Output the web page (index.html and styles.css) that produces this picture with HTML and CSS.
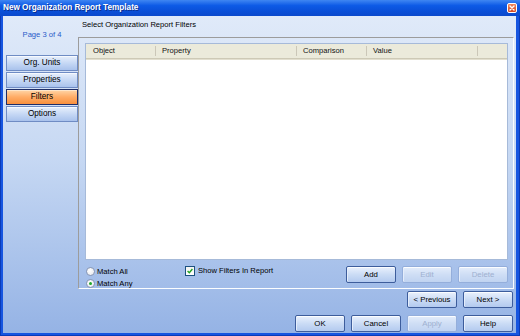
FILE: index.html
```html
<!DOCTYPE html>
<html lang="en">
<head>
  <meta charset="UTF-8" />
  <title>New Organization Report Template</title>
  <link rel="stylesheet" href="styles.css">
</head>
<body>
  <div class="window">
    <div class="titlebar">
      <span class="title">New Organization Report Template</span>
      <span class="close">
        <svg width="10" height="10" viewBox="0 0 10 10">
          <defs>
            <linearGradient id="cg" x1="0" y1="0" x2="0" y2="1">
              <stop offset="0" stop-color="#f08a60"/>
              <stop offset="1" stop-color="#d2441e"/>
            </linearGradient>
          </defs>
          <rect x="0.5" y="0.5" width="9" height="9" rx="1.5" fill="url(#cg)" stroke="#fff" stroke-width="1"/>
          <path d="M3 3 L7 7 M7 3 L3 7" stroke="#fff" stroke-width="1.4" stroke-linecap="round"/>
        </svg>
      </span>
    </div>

    <div class="content">
      <aside class="sidebar">
        <div class="page">Page 3 of 4</div>
        <nav class="steps">
          <div class="step">Org. Units</div>
          <div class="step">Properties</div>
          <div class="step active">Filters</div>
          <div class="step">Options</div>
        </nav>
      </aside>

      <main class="main">
        <div class="caption">Select Organization Report Filters</div>

        <section class="panel">
          <div class="list">
            <div class="list-head">
              <span class="col first">Object</span>
              <span class="col">Property</span>
              <span class="col">Comparison</span>
              <span class="col">Value</span>
              <span class="col last"></span>
            </div>
            <div class="list-body"></div>
          </div>

          <div class="panel-foot">
            <div class="match">
              <label class="opt"><span class="radio"></span>Match All</label>
              <label class="opt"><span class="radio on"></span>Match Any</label>
            </div>
            <label class="show">
              <span class="check">
                <svg width="6" height="6" viewBox="0 0 6 6"><path d="M0.6 3 L2.3 4.7 L5.4 1" fill="none" stroke="#21a121" stroke-width="1.4"/></svg>
              </span>
              Show Filters In Report
            </label>
            <div class="actions">
              <button class="btn">Add</button>
              <button class="btn" disabled>Edit</button>
              <button class="btn" disabled>Delete</button>
            </div>
          </div>
        </section>

        <div class="footer">
          <div class="row">
            <button class="btn">&lt; Previous</button>
            <button class="btn">Next &gt;</button>
          </div>
          <div class="row">
            <button class="btn">OK</button>
            <button class="btn">Cancel</button>
            <button class="btn" disabled>Apply</button>
            <button class="btn">Help</button>
          </div>
        </div>
      </main>
    </div>
  </div>
</body>
</html>
```

FILE: styles.css
```css
* {
  box-sizing: border-box;
}
body {
  margin: 0;
  font-family: 'Liberation Sans', Arial, sans-serif;
  font-size: 7.6px;
  color: #000;
}
.window {
  width: 520px;
  height: 336px;
  display: flex;
  flex-direction: column;
  background: #1655e0;
  box-shadow: inset 1px 0 #0a3bb8, inset -1px 0 #0a3bb8, inset 0 -1px #0a3bb8;
}
.titlebar {
  height: 16px;
  display: flex;
  align-items: center;
  justify-content: space-between;
  padding: 0 3px 0 3px;
  background: linear-gradient(#3f86f2, #0d5ae6 35%, #0a4fd8 70%, #0b49cc);
}
.title {
  color: #fff;
  font-weight: bold;
  font-size: 8.2px;
  line-height: 16px;
  text-shadow: 1px 1px 0 #0a2f90;
}
.close {
  display: flex;
  margin-top: -1px;
}
.content {
  flex: 1;
  display: flex;
  margin: 0 4px 3px 3px;
  background: linear-gradient(#e0eaf9, #c6d8f3 45%, #95b3e5);
}
.sidebar {
  width: 75px;
  padding-left: 3px;
}
.page {
  padding-top: 14px;
  line-height: 10px;
  text-align: center;
  color: #2a5bc8;
}
.steps {
  margin-top: 15px;
  display: flex;
  flex-direction: column;
  gap: 1px;
}
.step {
  height: 16px;
  line-height: 14px;
  text-align: center;
  font-size: 8.2px;
  border: 1px solid #6f8cc4;
  background: linear-gradient(#e8f0fc, #c3d6f4 55%, #a9c2ec);
  box-shadow: inset 0 1px #f6f9fe;
}
.step.active {
  border-color: #1d2d68;
  background: linear-gradient(#ffd6a8, #ffac66 50%, #f8903e);
  box-shadow: inset 0 1px #ffe6c8;
}
.main {
  flex: 1;
  display: flex;
  flex-direction: column;
}
.caption {
  height: 21px;
  padding: 4px 0 0 4px;
  line-height: 10px;
}
.panel {
  height: 252px;
  margin-right: 2px;
  padding: 5px 5px 0 6px;
  border-top: 1px solid #9c9c9c;
  border-left: 1px solid #9c9c9c;
  border-right: 1px solid #fbfdff;
  border-bottom: 1px solid #fbfdff;
}
.list {
  height: 217px;
  display: flex;
  flex-direction: column;
  border: 1px solid #a6bad9;
  background: #fff;
}
.list-head {
  height: 15px;
  display: grid;
  grid-template-columns: 70px 141px 70px 111px 1fr;
  background: #ebeadb;
  border-bottom: 1px solid #cdc9b6;
  box-shadow: 0 1px #e2dfcf;
}
.col {
  padding-left: 6px;
  line-height: 14px;
  color: #111;
  background: linear-gradient(#cbc7b8, #cbc7b8) right 2px / 1px 10px no-repeat;
}
.col.first {
  padding-left: 7px;
}
.col.last {
  background: none;
}
.list-body {
  flex: 1;
}
.panel-foot {
  display: flex;
  align-items: flex-start;
  padding-top: 5px;
}
.match {
  width: 100px;
  padding-left: 1px;
  display: flex;
  flex-direction: column;
}
.opt {
  display: flex;
  align-items: center;
  gap: 2px;
  height: 12px;
}
.radio {
  width: 9px;
  height: 9px;
  border-radius: 50%;
  border: 1px solid #8796b4;
  background: radial-gradient(circle at 40% 35%, #fff, #e3e6ec);
  display: flex;
  align-items: center;
  justify-content: center;
}
.radio.on::after {
  content: "";
  width: 3px;
  height: 3px;
  border-radius: 50%;
  background: #1fa82a;
}
.show {
  display: flex;
  align-items: center;
  gap: 3px;
  height: 11px;
}
.check {
  width: 10px;
  height: 10px;
  border: 1px solid #1c5180;
  background: linear-gradient(#f4f4f0, #fff);
  display: flex;
  align-items: center;
  justify-content: center;
}
.actions {
  margin-left: auto;
  margin-top: 1px;
  display: flex;
  gap: 6px;
}
.btn {
  width: 50px;
  height: 17px;
  padding: 0;
  font-family: inherit;
  font-size: 7.8px;
  color: #000;
  border: 1px solid #3d5d9c;
  border-radius: 2px;
  background: linear-gradient(#eaf1fd, #cbdcf5 50%, #b3caef);
  box-shadow: inset 0 1px #fbfdff, inset 1px 0 #e4edfb;
}
.btn:disabled {
  color: #9eb0d0;
  border-color: #94aedb;
  background: linear-gradient(#e4edfb, #cfdef5 50%, #c0d3f1);
}
.footer {
  flex: 1;
  padding: 2px 3px 0 0;
  display: flex;
  flex-direction: column;
  gap: 7px;
}
.row {
  display: flex;
  justify-content: flex-end;
  gap: 6px;
}
```
